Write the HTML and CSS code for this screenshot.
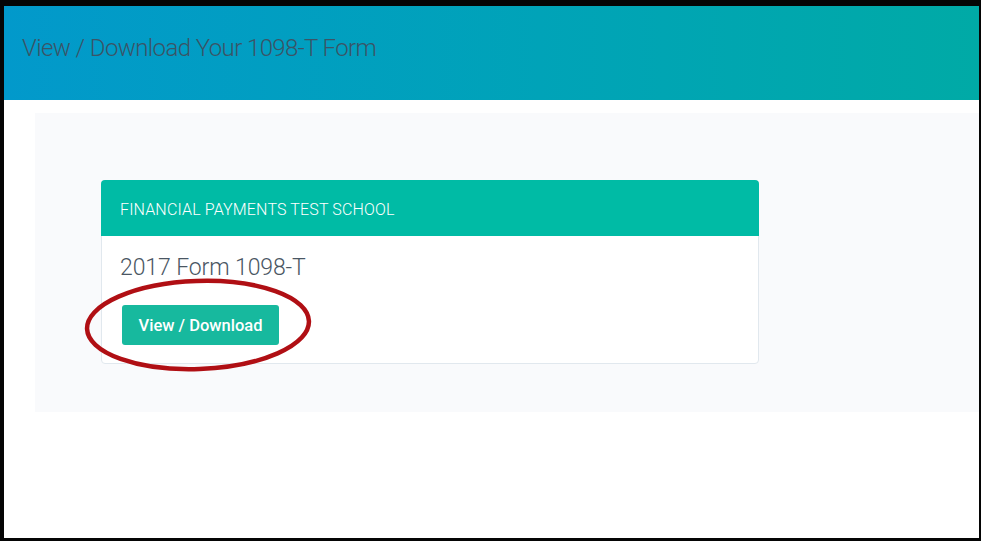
FILE: index.html
```html
<!DOCTYPE html>
<html lang="en">
<head>
<meta charset="utf-8">
<title>View / Download Your 1098-T Form</title>
<link rel="stylesheet" href="styles.css">
</head>
<body>
<div class="frame">
  <header class="topbar">
    <h1 class="title">View / Download Your 1098-T Form</h1>
  </header>
  <main class="main">
    <section class="panel">
      <div class="card">
        <div class="card-head">FINANCIAL PAYMENTS TEST SCHOOL</div>
        <div class="card-body">
          <div class="year">2017 Form 1098-T</div>
          <button class="btn" type="button">View / Download</button>
          <svg class="circle" width="240" height="100" viewBox="0 0 240 100" aria-hidden="true">
            <ellipse cx="120" cy="50" rx="111" ry="44" transform="rotate(-2 120 50)" fill="none" stroke="#b00f14" stroke-width="4.5"/>
          </svg>
        </div>
      </div>
    </section>
  </main>
</div>
</body>
</html>
```
FILE: styles.css
```css
html, body {
  margin: 0;
  padding: 0;
  background: #fff;
}
.frame {
  box-sizing: border-box;
  width: 981px;
  height: 541px;
  border-style: solid;
  border-color: #050505;
  border-width: 6px 2px 3px 4px;
  background: #fff;
  overflow: hidden;
  font-family: Roboto, "Liberation Sans", sans-serif;
}
.topbar {
  height: 94px;
  box-sizing: border-box;
  background: linear-gradient(90deg, #0299cb 0%, #00a3b8 55%, #00aaa6 100%);
  padding: 28px 0 0 18px;
}
.title {
  margin: 0;
  font-weight: 300;
  font-size: 24px;
  line-height: 28px;
  color: #3b5466;
  letter-spacing: -0.6px;
}
.main {
  padding: 13px 0 0 31px;
}
.panel {
  box-sizing: border-box;
  height: 299px;
  background: #f9fafc;
  padding: 67px 0 0 66px;
}
.card {
  position: relative;
  box-sizing: border-box;
  width: 658px;
  height: 184px;
  border: 1px solid #e1e8ee;
  border-radius: 4px;
  background: #fff;
}
.card-head {
  box-sizing: border-box;
  height: 56px;
  margin: -1px -1px 0 -1px;
  border-radius: 4px 4px 0 0;
  background: #00bba5;
  color: #fff;
  font-weight: 300;
  font-size: 16px;
  letter-spacing: 0.15px;
  display: flex;
  align-items: center;
  padding: 2px 0 0 19px;
}
.card-body {
  position: relative;
  padding: 17px 20px 0 18px;
}
.year {
  font-weight: 300;
  font-size: 23px;
  line-height: 30px;
  color: #4a5663;
  letter-spacing: -0.1px;
}
.btn {
  display: block;
  margin: 22px 0 0 2px;
  width: 157px;
  height: 40px;
  border: 0;
  border-radius: 3px;
  background: #17b99e;
  color: #fff;
  font-family: Roboto, "Liberation Sans", sans-serif;
  font-weight: 500;
  font-size: 16.5px;
  padding: 0;
}
.circle {
  position: absolute;
  left: -24px;
  top: 39px;
  pointer-events: none;
}
```
